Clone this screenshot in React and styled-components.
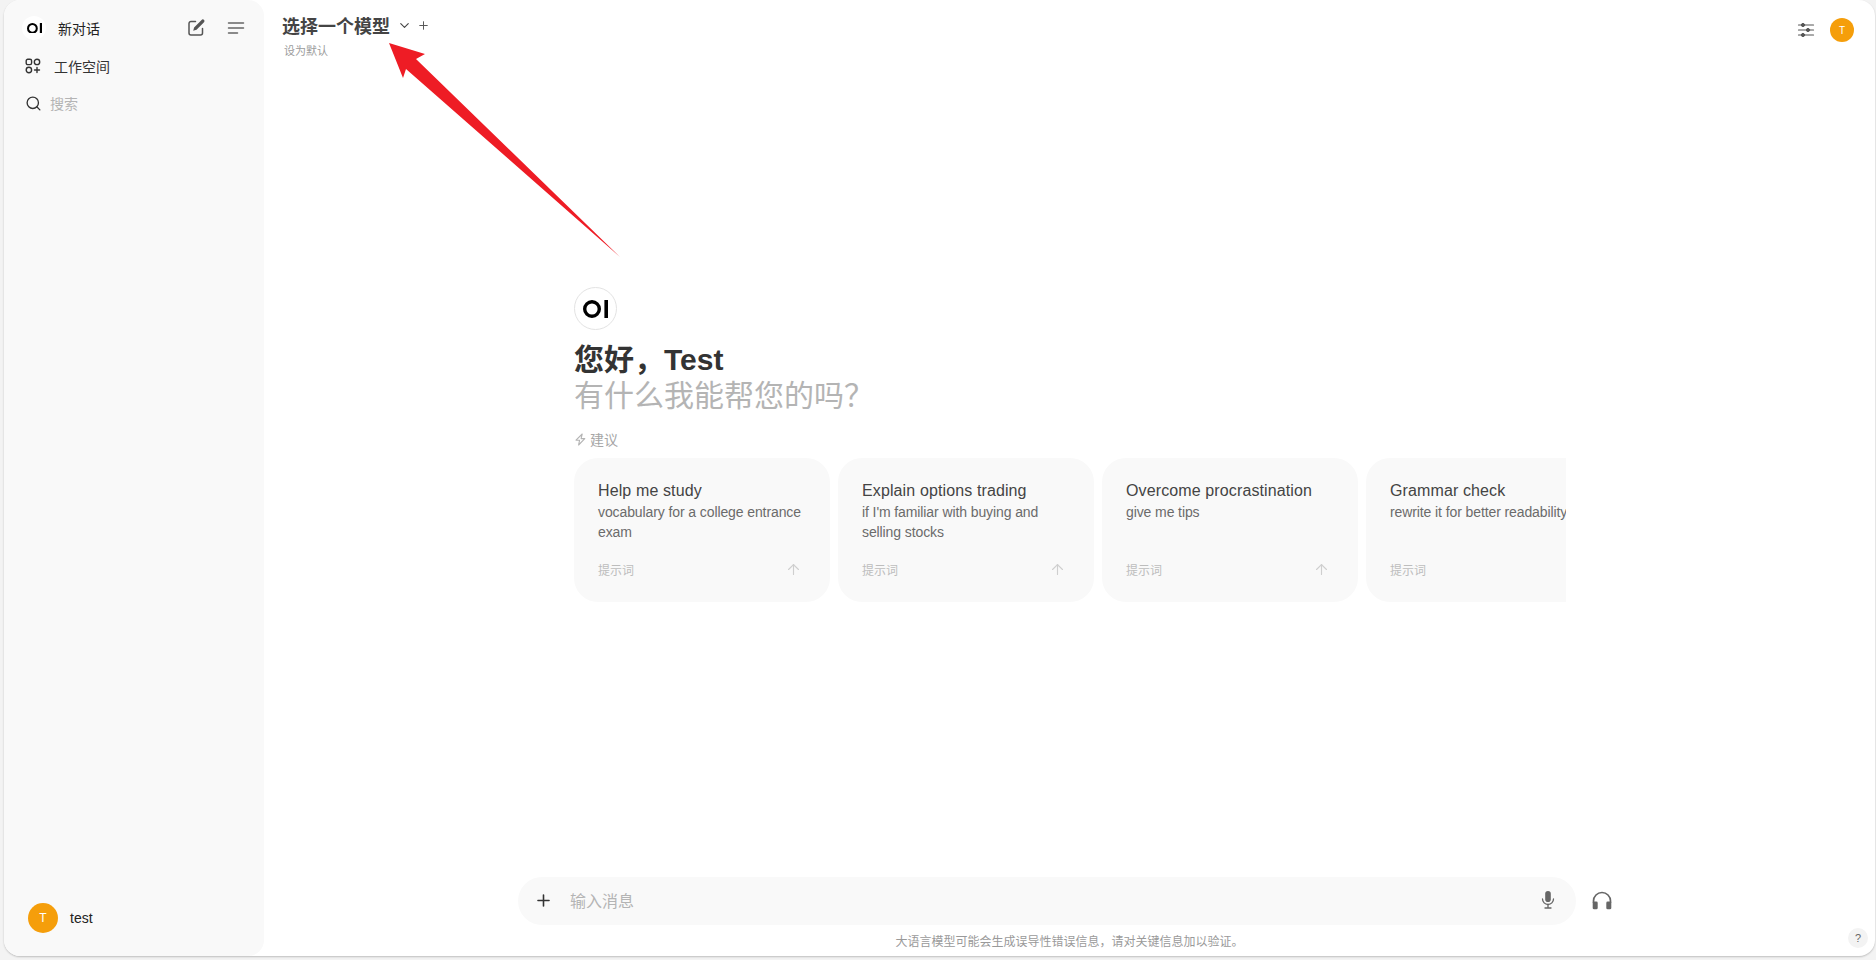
import React from 'react';
import styled, {createGlobalStyle} from 'styled-components';
import {ChevronDown, Plus, Search, ArrowUp} from 'lucide-react';

const Cjk = '"Noto Sans CJK SC"';
const UiFont = `"Liberation Sans", ${Cjk}, sans-serif`;

const GlobalStyle = createGlobalStyle`
  html, body {
    margin: 0;
    padding: 0;
    height: 100%;
    overflow: hidden;
    background: #f3f3f3;
    font-family: ${UiFont};
  }
  #root { height: 100%; }
`;

const Page = styled.div`
  position: relative;
  display: flex;
  width: 1876px;
  height: 960px;
  box-sizing: border-box;
  padding: 0 1px 4px 4px;
`;

const Frame = styled.div`
  flex: 1;
  display: flex;
  min-width: 0;
  background: #fff;
  border-radius: 16px;
  box-shadow: 0 1px 2px rgba(0, 0, 0, 0.22);
`;

const Sidebar = styled.aside`
  width: 260px;
  flex: none;
  display: flex;
  flex-direction: column;
  box-sizing: border-box;
  background: #f9f9f9;
  border-radius: 16px;
  padding: 16px 0 23px 0;
`;

const SideTop = styled.div`
  display: flex;
  align-items: center;
  height: 24px;
  padding: 0 18px 0 18px;
`;

const LogoSmall = styled.div`
  width: 24px;
  height: 24px;
  border-radius: 50%;
  background: #fff;
  display: flex;
  align-items: center;
  justify-content: center;
`;

const NewChat = styled.span`
  margin-left: 12px;
  flex: 1;
  font-size: 14px;
  color: #222;
`;

const IconSlot = styled.span`
  display: flex;
  margin-left: ${(props) => props.gap || 0}px;
  color: ${(props) => props.color || '#555'};
`;

const SideRow = styled.div`
  display: flex;
  align-items: center;
  height: 20px;
  margin-top: ${(props) => props.top}px;
  padding-left: 21px;
  font-size: 14px;
  color: ${(props) => props.muted ? '#b4b4b4' : '#333'};
`;

const SideLabel = styled.span`
  margin-left: ${(props) => props.gap}px;
`;

const SideFoot = styled.div`
  margin-top: auto;
  display: flex;
  align-items: center;
  padding-left: 24px;
  font-size: 14px;
  color: #222;
`;

const Avatar = styled.div`
  width: ${(props) => props.size}px;
  height: ${(props) => props.size}px;
  flex: none;
  border-radius: 50%;
  background: #f59e0b;
  color: #fff;
  font-size: ${(props) => props.font}px;
  display: flex;
  align-items: center;
  justify-content: center;
`;

const UserName = styled.span`
  margin-left: 12px;
`;

const Main = styled.main`
  position: relative;
  flex: 1;
  min-width: 0;
  display: flex;
  flex-direction: column;
`;

const TopBar = styled.header`
  height: 60px;
  flex: none;
  box-sizing: border-box;
  display: flex;
  justify-content: space-between;
  padding: 12px 21px 0 18px;
`;

const ModelBlock = styled.div`
  display: flex;
  flex-direction: column;
`;

const ModelRow = styled.div`
  display: flex;
  align-items: center;
  height: 26px;
  color: #444;
`;

const ModelTitle = styled.span`
  font-size: 18px;
  font-weight: 700;
  color: #444;
  margin-right: 7px;
`;

const SetDefault = styled.span`
  margin: 4px 0 0 2px;
  font-size: 11px;
  color: #9b9b9b;
`;

const TopRight = styled.div`
  display: flex;
  align-items: center;
  height: 32px;
  margin-top: 2px;
  gap: 15px;
`;

const Hero = styled.section`
  margin: 227px 0 0 310px;
  width: 992px;
`;

const LogoBig = styled.div`
  width: 43px;
  height: 43px;
  box-sizing: border-box;
  border: 1px solid #e3e3e3;
  border-radius: 50%;
  display: flex;
  align-items: center;
  justify-content: center;
`;

const Greeting = styled.h1`
  margin: 12px 0 0;
  font-size: 30px;
  line-height: 36px;
  font-weight: 700;
  color: #333;
`;

const SubGreeting = styled.div`
  font-size: 30px;
  line-height: 36px;
  color: #b4b4b4;
`;

const SuggestLabel = styled.div`
  display: flex;
  align-items: center;
  gap: 3px;
  margin-top: 15px;
  height: 20px;
  font-size: 14px;
  color: #a6a6a6;
`;

const CardRow = styled.div`
  display: flex;
  gap: 8px;
  margin-top: 9px;
  overflow: hidden;
`;

const Card = styled.div`
  flex: none;
  width: 256px;
  height: 144px;
  box-sizing: border-box;
  background: #f9f9f9;
  border-radius: 24px;
  padding: 21px 0 0 24px;
  display: flex;
  flex-direction: column;
`;

const CardTitle = styled.div`
  font-size: 16px;
  line-height: 24px;
  letter-spacing: 0.12px;
  color: #444;
`;

const CardText = styled.div`
  margin-top: -1px;
  width: 210px;
  font-size: 14px;
  line-height: 20px;
  letter-spacing: -0.1px;
  color: #6b6b6b;
  white-space: ${(props) => props.nowrap ? 'nowrap' : 'normal'};
`;

const CardFoot = styled.div`
  margin-top: auto;
  display: flex;
  align-items: center;
  justify-content: space-between;
  height: 18px;
  padding: 0 28px 24px 0;
  font-size: 12px;
  color: #bdbdbd;
`;

const Composer = styled.div`
  margin-top: auto;
  margin-bottom: 1px;
  display: flex;
  align-items: center;
  padding-left: 254px;
`;

const InputPill = styled.div`
  width: 1058px;
  height: 48px;
  box-sizing: border-box;
  background: #f9f9f9;
  border-radius: 24px;
  display: flex;
  align-items: center;
  padding: 0 18px 2px 16px;
`;

const Placeholder = styled.span`
  flex: 1;
  margin-left: 17px;
  font-size: 16px;
  color: #b4b4b4;
`;

const Disclaimer = styled.div`
  height: 28px;
  margin-bottom: 2px;
  flex: none;
  display: flex;
  align-items: center;
  justify-content: center;
  font-size: 12px;
  color: #9a9a9a;
`;

const HelpButton = styled.div`
  position: absolute;
  right: 7px;
  bottom: 8px;
  width: 20px;
  height: 20px;
  border-radius: 50%;
  background: #f3f3f3;
  display: flex;
  align-items: center;
  justify-content: center;
  font-size: 11px;
  color: #666;
`;

const ArrowOverlay = styled.svg`
  position: absolute;
  left: 0;
  top: 0;
  width: 700px;
  height: 300px;
  pointer-events: none;
`;

function OiLogo({width}) {
  return (
    <svg width={width} height={width * 0.72} viewBox="0 0 25 18" fill="none">
      <circle cx="9" cy="9" r="7.3" stroke="#000" strokeWidth="3.4" />
      <rect x="21.4" y="0" width="3.6" height="18" fill="#000" />
    </svg>
  );
}

function EditIcon() {
  return (
    <svg width="20" height="20" viewBox="0 0 20 20" fill="none">
      <path d="M9.5 3.5H5a2 2 0 0 0-2 2V15a2 2 0 0 0 2 2h9.5a2 2 0 0 0 2-2v-4.5" stroke="#555" strokeWidth="1.5" strokeLinecap="round" />
      <path d="M15.6 1.9a1.6 1.6 0 0 1 2.4 2.3l-7.5 7.6-3.3.9.9-3.3z" fill="#555" />
    </svg>
  );
}

function MenuIcon() {
  return (
    <svg width="20" height="20" viewBox="0 0 20 20" fill="none" stroke="#666" strokeWidth="1.5" strokeLinecap="round">
      <path d="M2.5 5h15M2.5 10h15M2.5 15h9" />
    </svg>
  );
}

function WorkspaceIcon() {
  return (
    <svg width="16" height="16" viewBox="0 0 16 16" fill="none" stroke="#333" strokeWidth="1.4" strokeLinecap="round">
      <rect x="1.2" y="1.2" width="5.4" height="5.4" rx="1.6" />
      <circle cx="12" cy="3.9" r="2.7" />
      <circle cx="3.9" cy="12" r="2.7" />
      <path d="M12 9.5v5M9.5 12h5" />
    </svg>
  );
}

function SlidersIcon() {
  return (
    <svg width="18" height="18" viewBox="0 0 18 18" fill="#555" stroke="#555" strokeLinecap="round">
      <path d="M1.5 4h15M1.5 9h15M1.5 14h15" strokeWidth="1.2" />
      <circle cx="6" cy="4" r="1.6" />
      <circle cx="11" cy="9" r="1.6" />
      <circle cx="6" cy="14" r="1.6" />
    </svg>
  );
}

function BoltIcon() {
  return (
    <svg width="13" height="13" viewBox="0 0 13 13" fill="none" stroke="#b4b4b4" strokeWidth="1.1" strokeLinejoin="round">
      <path d="M8.2 1 2 7.2h3.6L4.6 12l6.2-6.4H7.1z" />
    </svg>
  );
}

function MicIcon() {
  return (
    <svg width="20" height="20" viewBox="0 0 20 20" fill="none">
      <rect x="7.2" y="1" width="5.6" height="11" rx="2.8" fill="#666" />
      <path d="M4.5 9a5.5 5.5 0 0 0 11 0" stroke="#666" strokeWidth="1.3" strokeLinecap="round" />
      <path d="M10 14.5v3M7 18h6" stroke="#666" strokeWidth="1.3" strokeLinecap="round" />
    </svg>
  );
}

function HeadphonesIcon() {
  return (
    <svg width="20" height="20" viewBox="0 0 20 20" fill="none">
      <path d="M1.5 12V10a8.5 8.5 0 0 1 17 0v2" stroke="#666" strokeWidth="1.7" />
      <rect x="0.7" y="10.5" width="5" height="7.8" rx="1.4" fill="#666" />
      <rect x="14.3" y="10.5" width="5" height="7.8" rx="1.4" fill="#666" />
    </svg>
  );
}

const suggestions = [
  {title: 'Help me study', text: 'vocabulary for a college entrance exam'},
  {title: 'Explain options trading', text: "if I'm familiar with buying and selling stocks"},
  {title: 'Overcome procrastination', text: 'give me tips'},
  {title: 'Grammar check', text: 'rewrite it for better readability', nowrap: true, noArrow: true},
];

export default function App() {
  return (
    <>
      <GlobalStyle />
      <Page>
        <Frame>
          <Sidebar>
            <SideTop>
              <LogoSmall><OiLogo width={15} /></LogoSmall>
              <NewChat>新对话</NewChat>
              <IconSlot><EditIcon /></IconSlot>
              <IconSlot gap={20}><MenuIcon /></IconSlot>
            </SideTop>
            <SideRow top={16}>
              <IconSlot><WorkspaceIcon /></IconSlot>
              <SideLabel gap={13}>工作空间</SideLabel>
            </SideRow>
            <SideRow top={17} muted>
              <IconSlot color="#333"><Search size={17} strokeWidth={1.9} /></IconSlot>
              <SideLabel gap={8}>搜索</SideLabel>
            </SideRow>
            <SideFoot>
              <Avatar size={30} font={12}>T</Avatar>
              <UserName>test</UserName>
            </SideFoot>
          </Sidebar>
          <Main>
            <TopBar>
              <ModelBlock>
                <ModelRow>
                  <ModelTitle>选择一个模型</ModelTitle>
                  <ChevronDown size={15} strokeWidth={1.8} />
                  <IconSlot gap={5} color="#555"><Plus size={13} strokeWidth={1.8} /></IconSlot>
                </ModelRow>
                <SetDefault>设为默认</SetDefault>
              </ModelBlock>
              <TopRight>
                <SlidersIcon />
                <Avatar size={24} font={10}>T</Avatar>
              </TopRight>
            </TopBar>
            <Hero>
              <LogoBig><OiLogo width={25} /></LogoBig>
              <Greeting>您好，Test</Greeting>
              <SubGreeting>有什么我能帮您的吗？</SubGreeting>
              <SuggestLabel>
                <BoltIcon />
                建议
              </SuggestLabel>
              <CardRow>
                {suggestions.map((item) => (
                  <Card key={item.title}>
                    <CardTitle>{item.title}</CardTitle>
                    <CardText nowrap={item.nowrap}>{item.text}</CardText>
                    <CardFoot>
                      <span>提示词</span>
                      {!item.noArrow && <ArrowUp size={17} strokeWidth={1.6} color="#cfcfcf" />}
                    </CardFoot>
                  </Card>
                ))}
              </CardRow>
            </Hero>
            <Composer>
              <InputPill>
                <Plus size={19} strokeWidth={2} color="#333" />
                <Placeholder>输入消息</Placeholder>
                <MicIcon />
              </InputPill>
              <IconSlot gap={16}><HeadphonesIcon /></IconSlot>
            </Composer>
            <Disclaimer>大语言模型可能会生成误导性错误信息，请对关键信息加以验证。</Disclaimer>
            <HelpButton>?</HelpButton>
          </Main>
        </Frame>
        <ArrowOverlay viewBox="0 0 700 300">
          <polygon points="389,43 425,54 416,59 620,257 406,69 403,78" fill="#ee1c25" />
        </ArrowOverlay>
      </Page>
    </>
  );
}
